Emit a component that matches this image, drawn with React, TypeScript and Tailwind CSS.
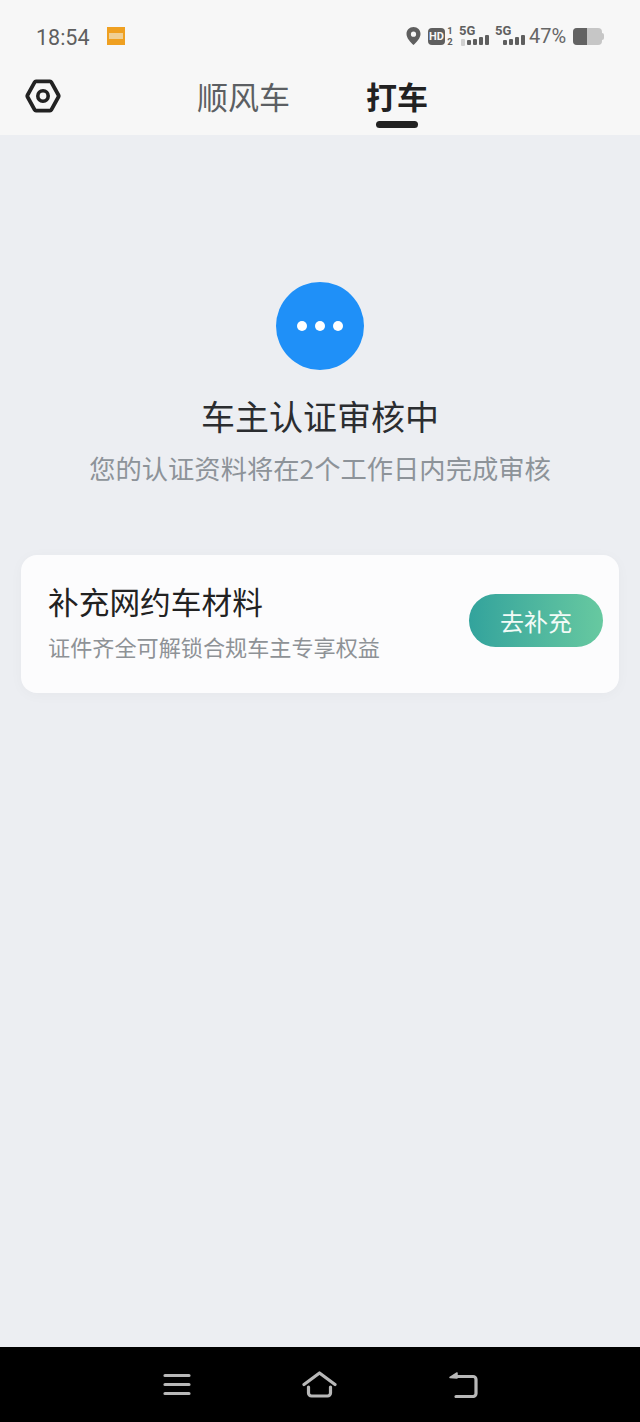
const cjk = "font-['Noto_Sans_CJK_SC','Noto_Sans',sans-serif]";

function SignalBars({ dim = false }: { dim?: boolean }) {
    return (
        <div className="relative w-[29px] h-[20px] shrink-0">
            <span className="absolute left-0 top-[-2px] text-[13px] leading-[14px] font-bold text-[#5f5f5f] font-['Roboto',sans-serif]">5G</span>
            <div className="absolute left-[8px] bottom-[1px] flex items-end gap-[2px]">
                <div className="w-[4px] h-[5px] rounded-[1px] bg-[#5f5f5f]" />
                <div className="w-[4px] h-[6px] rounded-[1px] bg-[#5f5f5f]" />
                <div className="w-[4px] h-[8px] rounded-[1px] bg-[#5f5f5f]" />
                <div className="w-[4px] h-[10px] rounded-[1px] bg-[#5f5f5f]" />
            </div>
            {dim && <div className="absolute left-[2px] bottom-[0px] w-[4px] h-[7px] rounded-[1px] bg-[#cfcfcf]" />}
        </div>
    );
}

function StatusBar() {
    return (
        <div className="h-[64px] flex items-center pl-[36px] pr-[36px] pt-[10px] text-[#5f5f5f]">
            <span className="w-[54px] text-[21.5px] leading-none font-['Roboto',sans-serif] mt-[2px]">18:54</span>
            <div className="ml-[17px] w-[18px] h-[18px] bg-[#efa021] flex items-center justify-center mt-[-3px]">
                <div className="w-[14px] h-[6px] bg-[#f0cf94]" />
            </div>
            <div className="ml-auto flex items-center mt-[-2px]">
                <svg width="15" height="18" viewBox="0 0 15 18" className="mr-[7px]">
                    <path fillRule="evenodd" fill="#5f5f5f" d="M7.5 0C3.4 0 .5 3 .5 7c0 4.2 4.2 8.4 7 11 2.8-2.6 7-6.8 7-11 0-4-2.9-7-7-7Zm0 4.6a2.6 2.6 0 1 1 0 5.2 2.6 2.6 0 0 1 0-5.2Z" />
                </svg>
                <div className="w-[17px] h-[17px] rounded-[4px] bg-[#5f5f5f] flex items-center justify-center text-[11px] leading-none font-bold text-[#f7f7f7] font-['Roboto',sans-serif]">HD</div>
                <div className="ml-[2px] w-[6px] flex flex-col items-center text-[9.5px] leading-[11px] font-bold font-['Roboto',sans-serif]">
                    <span>1</span>
                    <span>2</span>
                </div>
                <div className="ml-[6px]"><SignalBars dim /></div>
                <div className="ml-[7px]"><SignalBars /></div>
                <span className="ml-[5px] w-[38px] text-[20px] leading-none text-[#666666] font-['Roboto',sans-serif]">47%</span>
                <div className="ml-[6px] flex items-center">
                    <div className="w-[29px] h-[17px] rounded-[4px] bg-[#c6c6c6] overflow-hidden">
                        <div className="w-[14px] h-full bg-[#636363]" />
                    </div>
                    <div className="w-[2px] h-[7px] rounded-r-[2px] bg-[#c6c6c6]" />
                </div>
            </div>
        </div>
    );
}

function Tabs() {
    return (
        <div className="h-[71px] flex items-start pl-[25px]">
            <svg width="36" height="34" viewBox="0 0 36 34" className="mt-[15px] shrink-0" fill="none" stroke="#222222" strokeWidth="3.8" strokeLinejoin="round">
                <path d="M11 2.4h14a1.5 1.5 0 0 1 1.3.8L33.4 16a2 2 0 0 1 0 2l-7.1 12.8a1.5 1.5 0 0 1-1.3.8H11a1.5 1.5 0 0 1-1.3-.8L2.6 18a2 2 0 0 1 0-2L9.700 3.200a1.500 1.500 0 0 1 1.300-.8Z" />
                <circle cx="18" cy="17" r="5.2" strokeWidth="3.6" />
            </svg>
            <span className="ml-[136px] mt-[9px] text-[31px] leading-[46px] text-[#5c5f63]">顺风车</span>
            <div className="ml-[76px] mt-[9px] flex flex-col items-center">
                <span className="text-[31px] leading-[46px] font-bold text-[#222222]">打车</span>
                <div className="mt-[2px] w-[42px] h-[7px] rounded-full bg-[#222222]" />
            </div>
        </div>
    );
}

export default function App() {
    return (
        <div className={`w-[640px] h-[1422px] flex flex-col bg-[#eceef2] overflow-hidden ${cjk}`}>
            <header className="bg-[#f7f7f7] shrink-0">
                <StatusBar />
                <Tabs />
            </header>

            <main className="flex-1 flex flex-col px-[21px]">
                <div className="mt-[147px] flex flex-col items-center">
                    <div className="w-[88px] h-[88px] rounded-full bg-[#1f90f8] flex items-center justify-center gap-[8px]">
                        <div className="w-[10px] h-[10px] rounded-full bg-white" />
                        <div className="w-[10px] h-[10px] rounded-full bg-white" />
                        <div className="w-[10px] h-[10px] rounded-full bg-white" />
                    </div>
                    <h1 className="mt-[21px] text-[34px] leading-[50px] font-normal text-[#2b2d30]">车主认证审核中</h1>
                    <p className="mt-[8px] text-[26.3px] leading-[38px] text-[#8d9399]">您的认证资料将在2个工作日内完成审核</p>
                </div>

                <div className="mt-[68px] h-[138px] rounded-[16px] bg-[#fcfcfd] shadow-[0_2px_14px_rgba(0,0,0,0.03)] flex items-center pl-[27px] pr-[16px]">
                    <div className="flex flex-col pb-[8px]">
                        <span className="text-[30.7px] leading-[44px] text-[#222222]">补充网约车材料</span>
                        <span className="mt-[7px] text-[22.13px] leading-[32px] text-[#8e9296]">证件齐全可解锁合规车主专享权益</span>
                    </div>
                    <button className="ml-auto mb-[7px] w-[134px] h-[53px] rounded-full bg-gradient-to-r from-[#32a39c] to-[#67c9a0] text-[24px] text-[#f2fbf7]">去补充</button>
                </div>
            </main>

            <nav className="h-[75px] shrink-0 bg-black flex items-center justify-center gap-[111px] pb-[1px]">
                <svg width="28" height="23" viewBox="0 0 28 23" fill="none" stroke="#b8b8b8" strokeWidth="3.2" strokeLinecap="round">
                    <path d="M2 2.500h24M2 11.500h24M2 20.500h24" />
                </svg>
                <svg width="35" height="27" viewBox="0 0 35 27" fill="none" stroke="#b8b8b8" strokeWidth="3.2" strokeLinecap="round" strokeLinejoin="round">
                    <path d="M2 13.500 17.500 2 33 13.500" />
                    <path d="M6.500 16v6a3 3 0 0 0 3 3h16a3 3 0 0 0 3-3v-6" />
                </svg>
                <svg width="30" height="27" viewBox="0 0 30 27" fill="none" stroke="#b8b8b8" strokeWidth="3.2" strokeLinecap="round" strokeLinejoin="round">
                    <path d="M9 5.500h16a3 3 0 0 1 3 3v14a3 3 0 0 1-3 3H8" />
                    <path d="M2 6.500 9 2v5Z" fill="#b8b8b8" strokeWidth="1.500" />
                </svg>
            </nav>
        </div>
    );
}
